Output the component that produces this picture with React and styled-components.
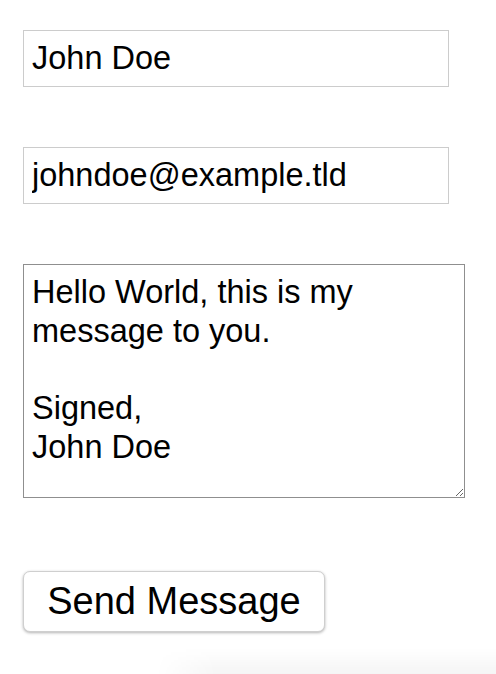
import React from "react";
import styled, { createGlobalStyle } from "styled-components";

const Global = createGlobalStyle`
  html, body { margin: 0; padding: 0; background: #ffffff; }
  body { font-family: "Liberation Sans", Arial, sans-serif; color: #000; }
  * { box-sizing: border-box; }
`;

const Form = styled.form`
  display: flex;
  flex-direction: column;
  align-items: flex-start;
  gap: 60px;
  padding: 30px 0 0 23px;
  min-height: 674px;
`;

const TextInput = styled.input`
  display: block;
  width: 426px;
  height: 57px;
  margin: 0;
  padding: 0 8px;
  border: 1px solid #cccccc;
  border-radius: 0;
  background: #fff;
  font-family: "Liberation Sans", Arial, sans-serif;
  font-size: 32.5px;
  color: #000;
  outline: none;
`;

const MessageArea = styled.textarea`
  display: block;
  width: 442px;
  height: 234px;
  margin: 0;
  padding: 8px 8px;
  border: 1px solid #8f8f8f;
  border-radius: 0;
  background: #fff;
  font-family: "Liberation Sans", Arial, sans-serif;
  font-size: 32.5px;
  line-height: 38.7px;
  color: #000;
  outline: none;
  resize: both;
`;

const SendButton = styled.button`
  display: block;
  width: 302px;
  height: 61px;
  margin: 13px 0 0 0;
  padding: 0;
  border: 1px solid #cfcfcf;
  border-radius: 7px;
  background: #ffffff;
  box-shadow: 0 1px 3px rgba(0, 0, 0, 0.3);
  font-family: "Liberation Sans", Arial, sans-serif;
  font-size: 38px;
  color: #000;
  cursor: pointer;
`;

const Shade = styled.div`
  position: fixed;
  right: 0;
  bottom: 0;
  width: 340px;
  height: 26px;
  pointer-events: none;
  background: linear-gradient(to bottom, rgba(0, 0, 0, 0), rgba(0, 0, 0, 0.04));
  -webkit-mask-image: linear-gradient(to right, transparent 0, #000 60px);
  mask-image: linear-gradient(to right, transparent 0, #000 60px);
`;

export default function App() {
  return (
    <>
      <Global />
      <Form onSubmit={(e) => e.preventDefault()}>
        <TextInput type="text" defaultValue="John Doe" />
        <TextInput type="email" defaultValue="johndoe@example.tld" />
        <MessageArea
          defaultValue={"Hello World, this is my message to you.\n\nSigned,\nJohn Doe"}
        />
        <SendButton type="submit">Send Message</SendButton>
      </Form>
      <Shade />
    </>
  );
}
